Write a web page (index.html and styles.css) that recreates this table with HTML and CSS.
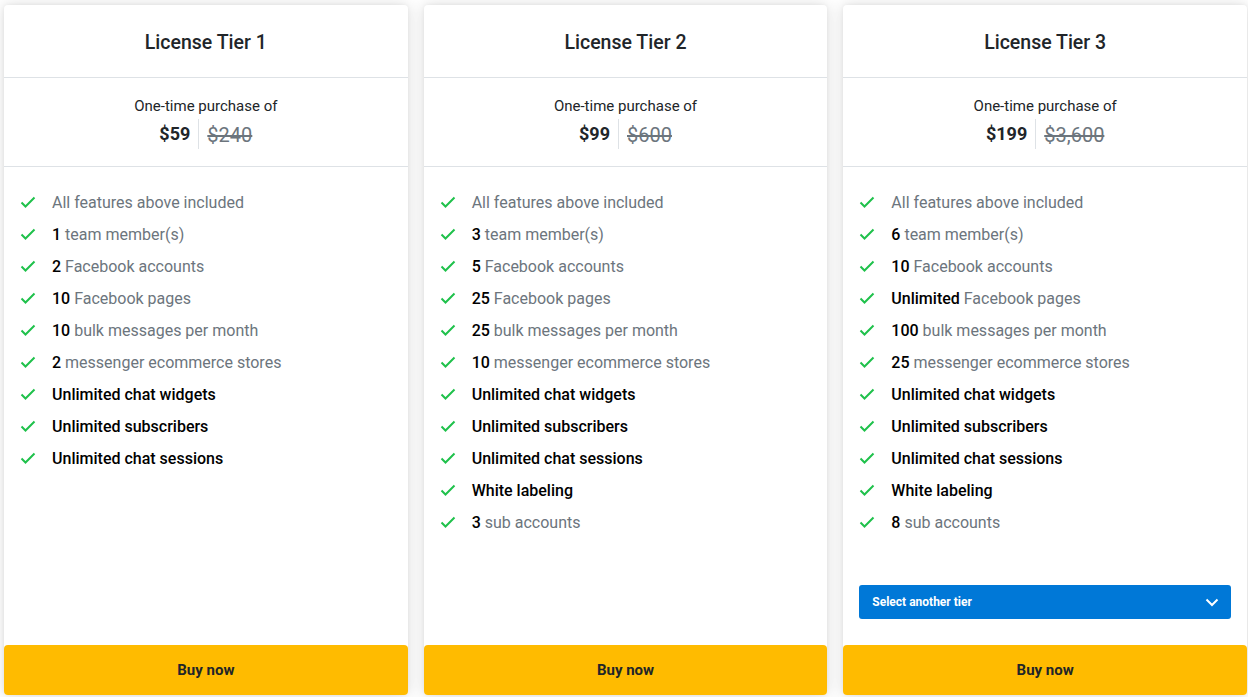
FILE: index.html
```html
<!DOCTYPE html>
<html>
<head>
<meta charset="utf-8">
<link rel="stylesheet" href="styles.css">
</head>
<body>
<div class="tiers">
  <div class="card">
    <div class="card-head">License Tier 1</div>
    <div class="price">
      <div class="price-label">One-time purchase of</div>
      <div class="price-row"><span class="now">$59</span><span class="was">$240</span></div>
    </div>
    <div class="features">
      <ul>
        <li><svg class="chk" viewBox="0 0 16 12"><path d="M1.5 6.5l4 4 9-9"/></svg><span>All features above included</span></li>
        <li><svg class="chk" viewBox="0 0 16 12"><path d="M1.5 6.5l4 4 9-9"/></svg><span><b>1</b> team member(s)</span></li>
        <li><svg class="chk" viewBox="0 0 16 12"><path d="M1.5 6.5l4 4 9-9"/></svg><span><b>2</b> Facebook accounts</span></li>
        <li><svg class="chk" viewBox="0 0 16 12"><path d="M1.5 6.5l4 4 9-9"/></svg><span><b>10</b> Facebook pages</span></li>
        <li><svg class="chk" viewBox="0 0 16 12"><path d="M1.5 6.5l4 4 9-9"/></svg><span><b>10</b> bulk messages per month</span></li>
        <li><svg class="chk" viewBox="0 0 16 12"><path d="M1.5 6.5l4 4 9-9"/></svg><span><b>2</b> messenger ecommerce stores</span></li>
        <li><svg class="chk" viewBox="0 0 16 12"><path d="M1.5 6.5l4 4 9-9"/></svg><span><b>Unlimited chat widgets</b></span></li>
        <li><svg class="chk" viewBox="0 0 16 12"><path d="M1.5 6.5l4 4 9-9"/></svg><span><b>Unlimited subscribers</b></span></li>
        <li><svg class="chk" viewBox="0 0 16 12"><path d="M1.5 6.5l4 4 9-9"/></svg><span><b>Unlimited chat sessions</b></span></li>
      </ul>
    </div>
    <button class="buy">Buy now</button>
  </div>

  <div class="card">
    <div class="card-head">License Tier 2</div>
    <div class="price">
      <div class="price-label">One-time purchase of</div>
      <div class="price-row"><span class="now">$99</span><span class="was">$600</span></div>
    </div>
    <div class="features">
      <ul>
        <li><svg class="chk" viewBox="0 0 16 12"><path d="M1.5 6.5l4 4 9-9"/></svg><span>All features above included</span></li>
        <li><svg class="chk" viewBox="0 0 16 12"><path d="M1.5 6.5l4 4 9-9"/></svg><span><b>3</b> team member(s)</span></li>
        <li><svg class="chk" viewBox="0 0 16 12"><path d="M1.5 6.5l4 4 9-9"/></svg><span><b>5</b> Facebook accounts</span></li>
        <li><svg class="chk" viewBox="0 0 16 12"><path d="M1.5 6.5l4 4 9-9"/></svg><span><b>25</b> Facebook pages</span></li>
        <li><svg class="chk" viewBox="0 0 16 12"><path d="M1.5 6.5l4 4 9-9"/></svg><span><b>25</b> bulk messages per month</span></li>
        <li><svg class="chk" viewBox="0 0 16 12"><path d="M1.5 6.5l4 4 9-9"/></svg><span><b>10</b> messenger ecommerce stores</span></li>
        <li><svg class="chk" viewBox="0 0 16 12"><path d="M1.5 6.5l4 4 9-9"/></svg><span><b>Unlimited chat widgets</b></span></li>
        <li><svg class="chk" viewBox="0 0 16 12"><path d="M1.5 6.5l4 4 9-9"/></svg><span><b>Unlimited subscribers</b></span></li>
        <li><svg class="chk" viewBox="0 0 16 12"><path d="M1.5 6.5l4 4 9-9"/></svg><span><b>Unlimited chat sessions</b></span></li>
        <li><svg class="chk" viewBox="0 0 16 12"><path d="M1.5 6.5l4 4 9-9"/></svg><span><b>White labeling</b></span></li>
        <li><svg class="chk" viewBox="0 0 16 12"><path d="M1.5 6.5l4 4 9-9"/></svg><span><b>3</b> sub accounts</span></li>
      </ul>
    </div>
    <button class="buy">Buy now</button>
  </div>

  <div class="card">
    <div class="card-head">License Tier 3</div>
    <div class="price">
      <div class="price-label">One-time purchase of</div>
      <div class="price-row"><span class="now">$199</span><span class="was">$3,600</span></div>
    </div>
    <div class="features">
      <ul>
        <li><svg class="chk" viewBox="0 0 16 12"><path d="M1.5 6.5l4 4 9-9"/></svg><span>All features above included</span></li>
        <li><svg class="chk" viewBox="0 0 16 12"><path d="M1.5 6.5l4 4 9-9"/></svg><span><b>6</b> team member(s)</span></li>
        <li><svg class="chk" viewBox="0 0 16 12"><path d="M1.5 6.5l4 4 9-9"/></svg><span><b>10</b> Facebook accounts</span></li>
        <li><svg class="chk" viewBox="0 0 16 12"><path d="M1.5 6.5l4 4 9-9"/></svg><span><b>Unlimited</b> Facebook pages</span></li>
        <li><svg class="chk" viewBox="0 0 16 12"><path d="M1.5 6.5l4 4 9-9"/></svg><span><b>100</b> bulk messages per month</span></li>
        <li><svg class="chk" viewBox="0 0 16 12"><path d="M1.5 6.5l4 4 9-9"/></svg><span><b>25</b> messenger ecommerce stores</span></li>
        <li><svg class="chk" viewBox="0 0 16 12"><path d="M1.5 6.5l4 4 9-9"/></svg><span><b>Unlimited chat widgets</b></span></li>
        <li><svg class="chk" viewBox="0 0 16 12"><path d="M1.5 6.5l4 4 9-9"/></svg><span><b>Unlimited subscribers</b></span></li>
        <li><svg class="chk" viewBox="0 0 16 12"><path d="M1.5 6.5l4 4 9-9"/></svg><span><b>Unlimited chat sessions</b></span></li>
        <li><svg class="chk" viewBox="0 0 16 12"><path d="M1.5 6.5l4 4 9-9"/></svg><span><b>White labeling</b></span></li>
        <li><svg class="chk" viewBox="0 0 16 12"><path d="M1.5 6.5l4 4 9-9"/></svg><span><b>8</b> sub accounts</span></li>
      </ul>
      <div class="select">
        <span>Select another tier</span>
        <svg class="chev" viewBox="0 0 14 9"><path d="M1.5 1.5l5.5 5.5 5.5-5.5"/></svg>
      </div>
    </div>
    <button class="buy">Buy now</button>
  </div>
</div>
</body>
</html>
```

FILE: styles.css
```css
html, body {
  margin: 0;
  padding: 0;
  background: #ffffff;
}

body {
  font-family: Roboto, "Liberation Sans", Arial, sans-serif;
  color: #212529;
  height: 697px;
  overflow: hidden;
}

.tiers {
  display: grid;
  grid-template-columns: repeat(3, 1fr);
  gap: 16px;
  width: 1243px;
  padding: 5px 0 0 4px;
  height: 690px;
}

.card {
  display: flex;
  flex-direction: column;
  background: #fff;
  border-radius: 4px;
  box-shadow: 0 0 16px rgba(0, 0, 0, 0.14), 0 0 4px rgba(0, 0, 0, 0.05);
  height: 690px;
}

.card-head {
  height: 73px;
  box-sizing: border-box;
  padding-top: 2px;
  display: flex;
  align-items: center;
  justify-content: center;
  font-size: 19.5px;
  font-weight: 500;
  color: #212529;
  border-bottom: 1px solid #dee2e6;
}

.price {
  height: 89px;
  box-sizing: border-box;
  border-bottom: 1px solid #dee2e6;
  display: flex;
  flex-direction: column;
  align-items: center;
  padding-top: 19px;
}

.price-label {
  font-size: 15px;
  line-height: 18px;
  color: #212529;
}

.price-row {
  display: flex;
  align-items: center;
  margin-top: 2px;
}

.now {
  font-size: 18px;
  font-weight: 700;
  padding-right: 8px;
  line-height: 30px;
  border-right: 1px solid #dee2e6;
}

.was {
  font-size: 20px;
  padding-left: 8px;
  color: #6c757d;
  text-decoration: line-through;
  line-height: 30px;
  padding-top: 3px;
}

.features {
  flex: 1;
  display: flex;
  flex-direction: column;
  padding: 19px 16px 26px 16px;
}

.features ul {
  list-style: none;
  margin: 0;
  padding: 0;
}

.features li {
  display: flex;
  align-items: center;
  height: 32px;
  font-size: 16px;
  color: #6c757d;
}

.features li b {
  color: #000;
  font-weight: 500;
}

.chk {
  width: 16px;
  height: 12px;
  margin-left: 0;
  margin-right: 16px;
  flex: none;
  fill: none;
  stroke: #1fc14b;
  stroke-width: 2;
}

.select {
  margin-top: auto;
  height: 34px;
  background: #0078d7;
  border-radius: 3px;
  display: flex;
  align-items: center;
  justify-content: space-between;
  padding: 0 12px 0 13px;
  color: #fff;
  font-size: 12px;
  font-weight: 700;
}

.chev {
  width: 14px;
  height: 9px;
  fill: none;
  stroke: #fff;
  stroke-width: 2;
}

.buy {
  height: 50px;
  border: none;
  border-radius: 4px;
  background: #ffbb00;
  font-family: inherit;
  font-size: 15px;
  font-weight: 700;
  color: #212529;
  cursor: pointer;
}
```
